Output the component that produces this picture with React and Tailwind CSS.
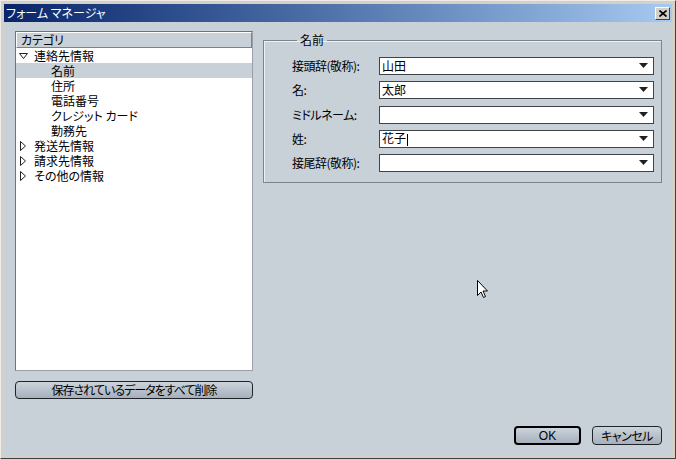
const JP = "font-['MS_UI_Gothic','Noto_Sans_CJK_JP','Noto_Sans',sans-serif] [font-feature-settings:'palt']";

function Expanded() {
  return (
    <svg width="9" height="8" viewBox="0 0 9 8" className="shrink-0">
      <path d="M0.5 1.5 H8.5 L4.5 6.5 Z" fill="#fff" stroke="#202020" strokeWidth="1" />
    </svg>
  );
}

function Collapsed() {
  return (
    <svg width="8" height="10" viewBox="0 0 8 10" className="shrink-0">
      <path d="M1.5 0.5 V9.5 L6.5 5 Z" fill="#fff" stroke="#202020" strokeWidth="1" />
    </svg>
  );
}

function Combo({ value, caret }) {
  return (
    <div className="shrink-0 w-[275px] h-[18px] bg-white border border-[#404448] flex items-center pl-[2px] pr-[5px]">
      <span className="flex-1 text-[12px] leading-none text-black">
        {value}
        {caret && <span className="inline-block w-px h-[12px] bg-black align-middle ml-px" />}
      </span>
      <svg width="9" height="6" viewBox="0 0 9 6">
        <path d="M0 0 H9 L4.5 5 Z" fill="#202020" />
      </svg>
    </div>
  );
}

const tree = [
  { label: '連絡先情報', kind: 'open' },
  { label: '名前', kind: 'child', selected: true },
  { label: '住所', kind: 'child' },
  { label: '電話番号', kind: 'child' },
  { label: 'クレジット カード', kind: 'child' },
  { label: '勤務先', kind: 'child' },
  { label: '発送先情報', kind: 'closed' },
  { label: '請求先情報', kind: 'closed' },
  { label: 'その他の情報', kind: 'closed' },
];

const fields = [
  { label: '接頭辞(敬称):', value: '山田' },
  { label: '名:', value: '太郎' },
  { label: 'ミドルネーム:', value: '' },
  { label: '姓:', value: '花子', caret: true },
  { label: '接尾辞(敬称):', value: '' },
];

export default function App() {
  return (
    <div className={`relative w-[676px] h-[459px] bg-[#d4d0c8] border-t border-l border-[#eeece8] border-r-[#404040] border-b-[#404040] border-r border-b p-[3px] flex flex-col ${JP} text-black select-none`}>
      {/* Title bar */}
      <div className="h-[18px] bg-gradient-to-r from-[#0a246a] to-[#a6caf0] flex items-center pl-[2px] pr-[2px]">
        <span className="flex-1 text-white text-[12px] leading-none">フォーム マネージャ</span>
        <div className="w-[15px] h-[13px] bg-[#d4d0c8] border border-t-white border-l-white border-r-[#404040] border-b-[#404040] flex items-center justify-center">
          <svg width="8" height="7" viewBox="0 0 8 7">
            <path d="M0.5 0.5 L7.5 6.5 M7.5 0.5 L0.5 6.5" stroke="#000" strokeWidth="1.6" />
          </svg>
        </div>
      </div>

      {/* Body */}
      <div className="flex-1 bg-[#c8d0d8] flex pl-[11px] pr-[10px] pt-[9px] pb-[10px] gap-[10px]">
        {/* Left column */}
        <div className="w-[238px] shrink-0 flex flex-col gap-[10px]">
          <div className="h-[340px] bg-white border border-t-[#6e747c] border-l-[#6e747c] border-r-[#9aa0a8] border-b-[#9aa0a8] flex flex-col">
            <div className="h-[16px] bg-[#c8d0d8] border-b border-r border-b-[#7c828a] border-r-[#7c828a] border-t border-l border-t-white border-l-white flex items-center pl-[4px] text-[12px] leading-none">
              カテゴリ
            </div>
            {tree.map((t) => (
              <div
                key={t.label}
                className={`h-[15px] flex items-center text-[12px] leading-[15px] ${t.selected ? 'bg-[#c8d0d8]' : ''} ${t.kind === 'child' ? 'pl-[35px]' : 'pl-[3px] gap-[6px]'}`}
              >
                {t.kind === 'open' && <Expanded />}
                {t.kind === 'closed' && <Collapsed />}
                <span className={t.kind === 'closed' ? 'ml-px' : ''}>{t.label}</span>
              </div>
            ))}
          </div>
          <button className="h-[18px] rounded-[4px] border border-[#202428] bg-gradient-to-b from-[#ccd4dc] to-[#a6b0bc] text-[12px] leading-none tracking-[-1px] text-black">
            保存されているデータをすべて削除
          </button>
        </div>

        {/* Right column */}
        <div className="flex-1 flex flex-col">
          <fieldset className="mt-[3px] w-[398px] border border-[#7d848c] shadow-[inset_1px_1px_0_#eef0f2] pt-[11px] pb-[10px] pl-[28px] pr-[7px] flex flex-col gap-[6.3px]">
            <legend className="ml-[5px] px-[3px] text-[12px] leading-none">名前</legend>
            {fields.map((f) => (
              <div key={f.label} className="flex items-center">
                <span className="shrink-0 w-[87px] whitespace-nowrap text-[12px] leading-none tracking-[-0.5px]">{f.label}</span>
                <Combo value={f.value} caret={f.caret} />
              </div>
            ))}
          </fieldset>

          <div className="mt-auto flex justify-end gap-[11px]">
            <button className="w-[67px] h-[19px] rounded-[4px] border-2 border-black bg-gradient-to-b from-[#ccd4dc] to-[#a6b0bc] text-[12px] leading-none font-['Liberation_Sans',sans-serif]">
              OK
            </button>
            <button className="w-[70px] h-[19px] rounded-[4px] border border-[#202428] bg-gradient-to-b from-[#ccd4dc] to-[#a6b0bc] text-[12px] leading-none tracking-[-0.5px]">
              キャンセル
            </button>
          </div>
        </div>
      </div>

      {/* Mouse cursor */}
      <svg className="absolute left-[476px] top-[279px]" width="12" height="19" viewBox="0 0 12 19">
        <path d="M0.5 0.5 V15.5 L4 12 L6.5 17.5 L8.5 16.5 L6 11 H10.5 Z" fill="#fff" stroke="#000" strokeWidth="1" />
      </svg>
    </div>
  );
}
